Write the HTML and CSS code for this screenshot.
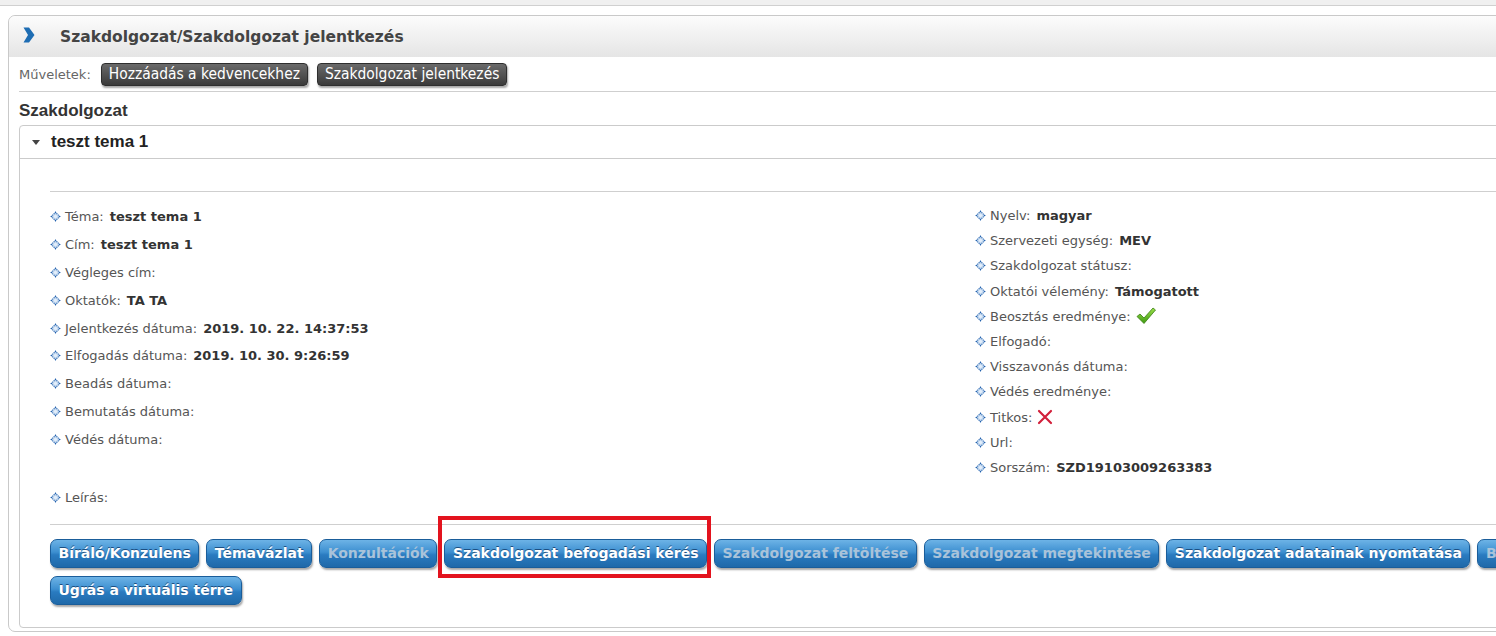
FILE: index.html
```html
<!DOCTYPE html>
<html lang="hu">
<head>
<meta charset="utf-8">
<title>Szakdolgozat jelentkezés</title>
<link rel="stylesheet" href="styles.css">
</head>
<body>
<div class="topstrip"></div>
<div class="panel">
  <div class="panel-head">
    <svg class="chev" width="12" height="16" viewBox="0 0 12 16"><path d="M0.5 0.5 L6 0.5 L11.5 8 L6 15.5 L0.5 15.5 L5 8 Z" fill="#1e6db3"/></svg>
    <span class="panel-title">Szakdolgozat/Szakdolgozat jelentkezés</span>
  </div>
  <div class="panel-body">
    <div class="actions">
      <span class="actions-label">Műveletek:</span>
      <span class="dark-btn">Hozzáadás a kedvencekhez</span>
      <span class="dark-btn">Szakdolgozat jelentkezés</span>
    </div>
    <h2 class="section-title">Szakdolgozat</h2>
    <div class="box">
      <div class="box-head">
        <svg class="tri" width="8" height="5" viewBox="0 0 8 5"><path d="M0 0 L8 0 L4 5 Z" fill="#444"/></svg>
        <span>teszt tema 1</span>
      </div>
      <div class="box-body">
        <div class="sep"></div>
        <div class="cols">
          <div class="col col-left">
            <div class="row"><i class="dia"></i><span class="lbl">Téma:</span><b>teszt tema 1</b></div>
            <div class="row"><i class="dia"></i><span class="lbl">Cím:</span><b>teszt tema 1</b></div>
            <div class="row"><i class="dia"></i><span class="lbl">Végleges cím:</span></div>
            <div class="row"><i class="dia"></i><span class="lbl">Oktatók:</span><b>TA TA</b></div>
            <div class="row"><i class="dia"></i><span class="lbl">Jelentkezés dátuma:</span><b>2019. 10. 22. 14:37:53</b></div>
            <div class="row"><i class="dia"></i><span class="lbl">Elfogadás dátuma:</span><b>2019. 10. 30. 9:26:59</b></div>
            <div class="row"><i class="dia"></i><span class="lbl">Beadás dátuma:</span></div>
            <div class="row"><i class="dia"></i><span class="lbl">Bemutatás dátuma:</span></div>
            <div class="row"><i class="dia"></i><span class="lbl">Védés dátuma:</span></div>
          </div>
          <div class="col col-right">
            <div class="row"><i class="dia"></i><span class="lbl">Nyelv:</span><b>magyar</b></div>
            <div class="row"><i class="dia"></i><span class="lbl">Szervezeti egység:</span><b>MEV</b></div>
            <div class="row"><i class="dia"></i><span class="lbl">Szakdolgozat státusz:</span></div>
            <div class="row"><i class="dia"></i><span class="lbl">Oktatói vélemény:</span><b>Támogatott</b></div>
            <div class="row"><i class="dia"></i><span class="lbl">Beosztás eredménye:</span>
              <svg class="ico" width="20" height="18" viewBox="0 0 20 18"><defs><linearGradient id="g" x1="0" y1="0" x2="0" y2="1"><stop offset="0" stop-color="#9be04a"/><stop offset="1" stop-color="#3f9a12"/></linearGradient></defs><path d="M1 9.5 L4 7 L8 11 L17 1 L19.5 3 L8 16.5 Z" fill="url(#g)" stroke="#3a7d14" stroke-width="0.8"/></svg>
            </div>
            <div class="row"><i class="dia"></i><span class="lbl">Elfogadó:</span></div>
            <div class="row"><i class="dia"></i><span class="lbl">Visszavonás dátuma:</span></div>
            <div class="row"><i class="dia"></i><span class="lbl">Védés eredménye:</span></div>
            <div class="row"><i class="dia"></i><span class="lbl">Titkos:</span>
              <svg class="ico" width="16" height="16" viewBox="0 0 16 16"><path d="M2 2 L14 14 M14 2 L2 14" stroke="#d2203b" stroke-width="2.2" stroke-linecap="round"/></svg>
            </div>
            <div class="row"><i class="dia"></i><span class="lbl">Url:</span></div>
            <div class="row"><i class="dia"></i><span class="lbl">Sorszám:</span><b>SZD19103009263383</b></div>
          </div>
        </div>
        <div class="row desc"><i class="dia"></i><span class="lbl">Leírás:</span></div>
        <div class="sep sep2"></div>
        <div class="buttons">
          <span class="btn">Bíráló/Konzulens</span>
          <span class="btn">Témavázlat</span>
          <span class="btn off">Konzultációk</span>
          <span class="btn hl">Szakdolgozat befogadási kérés</span>
          <span class="btn off">Szakdolgozat feltöltése</span>
          <span class="btn off">Szakdolgozat megtekintése</span>
          <span class="btn">Szakdolgozat adatainak nyomtatása</span>
          <span class="btn off">Bírálat</span>
        </div>
        <div class="buttons">
          <span class="btn">Ugrás a virtuális térre</span>
        </div>
      </div>
    </div>
  </div>
</div>
</body>
</html>
```

FILE: styles.css
```css
html, body {
  margin: 0;
  padding: 0;
  background: #fff;
  overflow: hidden;
  font-family: "DejaVu Sans", Verdana, sans-serif;
  color: #333;
}
.topstrip {
  height: 5px;
  background: #f0f0f0;
  border-bottom: 1px solid #d0d0d0;
}
.panel {
  margin: 9px -40px 0 8px;
  border: 1px solid #c9c9c9;
  border-radius: 7px;
  height: 617px;
  box-sizing: border-box;
}
.panel-head {
  height: 41px;
  display: flex;
  align-items: center;
  border-radius: 7px 7px 0 0;
  background: linear-gradient(#fcfcfc, #e5e5e5);
}
.chev {
  margin-left: 14px;
  margin-top: -3px;
}
.panel-title {
  margin-left: 25px;
  font-weight: bold;
  font-size: 15.5px;
  color: #444;
}
.panel-body {
  padding: 0 0 0 10px;
}
.actions {
  display: flex;
  align-items: center;
  height: 34px;
  border-bottom: 1px solid #cfcfcf;
  gap: 9px;
}
.actions-label {
  font-size: 13px;
  color: #666;
  margin-right: 1px;
}
.dark-btn {
  font-family: "DejaVu Sans Condensed", "DejaVu Sans", sans-serif;
  font-size: 15.4px;
  line-height: 18px;
  color: #fff;
  background: linear-gradient(#6a6a6a, #3a3a3a);
  border: 1px solid #2e2e2e;
  border-radius: 4px;
  padding: 1px 7px 2px;
  box-shadow: 1px 2px 2px rgba(0,0,0,0.35);
}
.section-title {
  margin: 9px 0 4px;
  font-family: "Liberation Sans", Arial, sans-serif;
  font-size: 17px;
  font-weight: bold;
  color: #333;
  line-height: 20px;
}
.box {
  border: 1px solid #cbcbcb;
  border-radius: 4px;
  height: 503px;
  box-sizing: border-box;
}
.box-head {
  height: 32px;
  display: flex;
  align-items: center;
  border-bottom: 1px solid #cbcbcb;
  font-family: "Liberation Sans", Arial, sans-serif;
  font-weight: bold;
  font-size: 17px;
  color: #222;
}
.tri {
  margin-left: 12px;
  margin-right: 11px;
}
.box-body {
  padding: 32px 0 0 30px;
}
.sep {
  border-top: 1px solid #cfcfcf;
}
.cols {
  display: flex;
  padding-top: 11px;
}
.col-left {
  width: 925px;
}
.col-left .row {
  height: 27.8px;
}
.col-right .row {
  height: 25.2px;
}
.row {
  display: flex;
  align-items: center;
  font-size: 13px;
  color: #555;
  white-space: nowrap;
}
.row b {
  color: #333;
  margin-left: 6px;
  font-weight: bold;
}
.lbl {
  margin-left: 6px;
}
.ico {
  margin-left: 5px;
}
.dia {
  width: 7px;
  height: 7px;
  margin-left: 2px;
  transform: rotate(45deg);
  border: 1.5px dotted #1a5aa8;
  background: radial-gradient(#e3eefa 40%, #8fb4de);
  display: inline-block;
  box-sizing: border-box;
}
.desc {
  height: 28px;
  margin-top: 3px;
}
.sep2 {
  margin-top: 13px;
}
.buttons {
  display: flex;
  gap: 7px;
  margin-top: 14px;
  white-space: nowrap;
}
.buttons + .buttons {
  margin-top: 8px;
}
.btn {
  position: relative;
  font-size: 14px;
  font-weight: bold;
  color: #fff;
  text-shadow: 0 -1px 0 #1c4f82;
  height: 29px;
  line-height: 27px;
  box-sizing: border-box;
  padding: 0 7.5px;
  border: 1px solid #1a5d9a;
  border-radius: 7px;
  background: linear-gradient(#6db3e6 0%, #3d8fd0 45%, #2a7bc0 55%, #1f69a9 100%);
  box-shadow: 1px 2px 2px rgba(0,0,0,0.35);
}
.btn.off {
  color: #a9c3da;
  text-shadow: none;
}
.btn.hl::after {
  content: "";
  position: absolute;
  left: -7px;
  right: -5px;
  top: -24px;
  bottom: -11px;
  border: 4px solid #e3131e;
}
```
